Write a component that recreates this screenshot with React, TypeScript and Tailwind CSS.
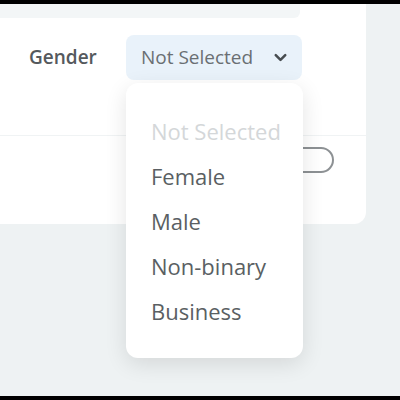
import { ChevronDown } from 'lucide-react'

const options = ['Not Selected', 'Female', 'Male', 'Non-binary', 'Business']

export default function App() {
  return (
    <div className="w-[400px] h-[400px] bg-[#eef2f3] flex flex-col overflow-hidden font-['Open_Sans',sans-serif]">
      <div className="h-[4px] bg-black shrink-0" />

      <div className="relative flex-1">
        {/* Settings card */}
        <div className="w-[366px] h-[220px] bg-white rounded-br-xl flex flex-col">
          <div className="h-[14px] w-[300px] bg-[#f3f6f7] rounded-br-md" />

          {/* Gender row */}
          <div className="flex items-center mt-[17px] h-[45px]">
            <span className="w-[126px] pl-[29px] text-[19px] font-semibold text-[#55595d]">Gender</span>
            <button className="w-[176px] h-[45px] bg-[#e9f2fa] rounded-lg flex items-center justify-between pl-[15px] pr-[12px]">
              <span className="text-[19px] text-[#6a6f73]">Not Selected</span>
              <ChevronDown className="w-[19px] h-[19px] text-[#474c50]" strokeWidth={3.2} />
            </button>
          </div>

          <div className="mt-[55px] border-t border-[#f0f3f4]" />

          {/* Toggle (partly hidden) */}
          <div className="flex justify-end pr-[32px] mt-[11px]">
            <div className="w-[64px] h-[26px] rounded-full border-2 border-[#8d9194]" />
          </div>
        </div>

        {/* Open dropdown menu */}
        <div className="absolute left-[126px] top-[79px] w-[177px] h-[275px] bg-white rounded-xl shadow-[0_6px_22px_rgba(0,0,0,0.11)] flex flex-col pt-[26px] pl-[25px]">
          {options.map((opt, i) => (
            <div
              key={opt}
              className={`h-[45px] flex items-center text-[22px] ${i === 0 ? 'text-[#d4d7d9]' : 'text-[#5a5f63]'}`}
            >
              {opt}
            </div>
          ))}
        </div>
      </div>

      <div className="h-[4px] bg-black shrink-0" />
    </div>
  )
}
